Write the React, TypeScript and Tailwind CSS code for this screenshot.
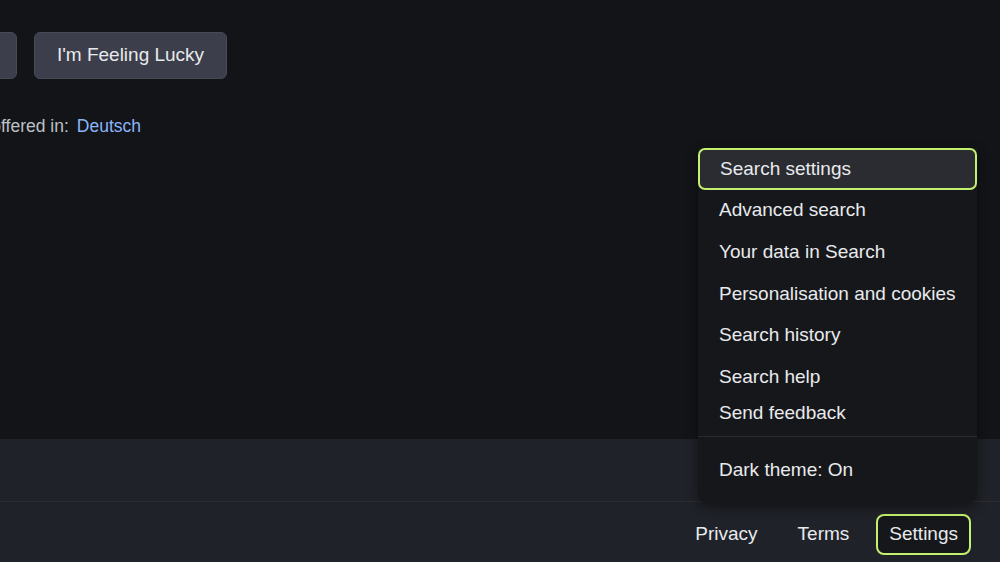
import React from 'react';

const menuItems = [
  { label: 'Search settings', h: 'h-[42px]', active: true },
  { label: 'Advanced search', h: 'h-[41px]' },
  { label: 'Your data in Search', h: 'h-[42px]' },
  { label: 'Personalisation and cookies', h: 'h-[42px]' },
  { label: 'Search history', h: 'h-[41px]' },
  { label: 'Search help', h: 'h-[42px]' },
  { label: 'Send feedback', h: 'h-[30px]' },
];

function SettingsMenu() {
  return (
    <div className="absolute left-[698px] top-[148px] w-[279px] rounded-b-[9px] bg-[#16171b] shadow-[0_4px_12px_rgba(0,0,0,0.45)]">
      <ul>
        {menuItems.map((item) => (
          <li
            key={item.label}
            className={`${item.h} flex items-center text-[19px] text-[#e8eaed] ${
              item.active
                ? 'rounded-[7px] border-2 border-[#c3f06e] bg-[#2b2c32] pl-[20px]'
                : 'pl-[21px]'
            }`}
          >
            {item.label}
          </li>
        ))}
      </ul>
      <div className="mt-[8px] border-t border-[#2b2c31]" />
      <div className="flex h-[66px] items-center pl-[21px] text-[19px] text-[#e8eaed]">
        Dark theme: On
      </div>
    </div>
  );
}

export default function App() {
  return (
    <div
      className="relative flex h-[562px] w-[1000px] flex-col overflow-hidden bg-[#131418]"
      style={{ fontFamily: '"Liberation Sans", Arial, sans-serif' }}
    >
      {/* Main area */}
      <main className="h-[439px] shrink-0">
        <div className="ml-[-156px] mt-[32px] flex gap-[17px]">
          <button className="h-[47px] w-[173px] rounded-[6px] border border-[#474a56] bg-[#3c3f4b] text-[19px] text-[#e8eaed]">
            Google Search
          </button>
          <button className="h-[47px] w-[193px] rounded-[6px] border border-[#474a56] bg-[#3c3f4b] text-[19px] text-[#e8eaed]">
            I'm Feeling Lucky
          </button>
        </div>
        <div className="ml-[-70px] mt-[34px] flex items-center text-[17.5px] text-[#bdc1c6]">
          <span>Google offered in:</span>
          <a className="ml-[8px] text-[#8ab4f8]">Deutsch</a>
        </div>
      </main>

      {/* Footer */}
      <footer className="flex flex-1 flex-col bg-[#202229]">
        <div className="h-[63px] border-b border-[#2b2c2f]" />
        <div className="flex flex-1 items-center justify-end gap-[14px] pt-[4px] pr-[29px] text-[19px] text-[#e8eaed]">
          <a className="flex h-[41px] items-center px-[13px]">Privacy</a>
          <a className="flex h-[41px] items-center px-[13px]">Terms</a>
          <a className="flex h-[41px] items-center rounded-[8px] border-2 border-[#c3f06e] bg-[#16171b] px-[11px]">
            Settings
          </a>
        </div>
      </footer>

      <SettingsMenu />
    </div>
  );
}
